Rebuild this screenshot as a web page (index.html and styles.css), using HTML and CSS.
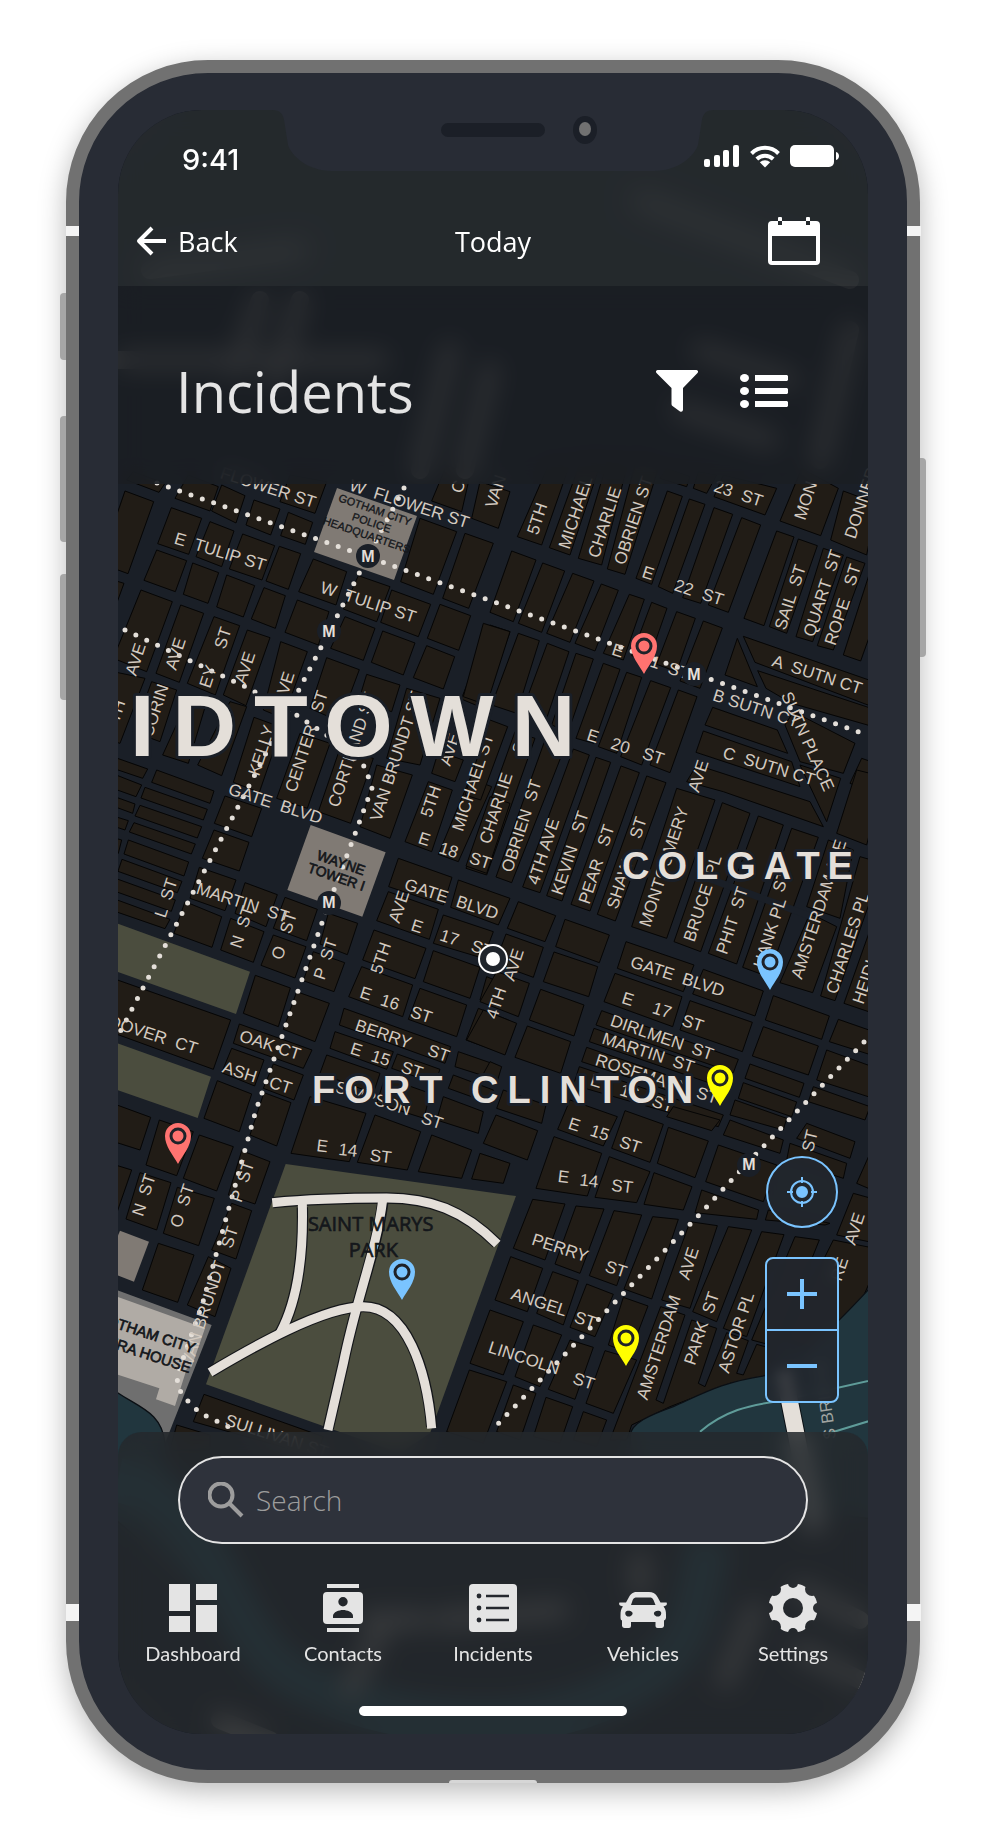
FILE: index.html
```html
<!DOCTYPE html>
<html lang="en">
<head>
<meta charset="utf-8">
<meta name="viewport" content="width=device-width, initial-scale=1">
<title>Incidents</title>
<link rel="stylesheet" href="styles.css">
</head>
<body>
<div class="phone">
  <span class="band band-tl"></span><span class="band band-tr"></span>
  <span class="band band-bl"></span><span class="band band-br"></span>
  <span class="key key-mute"></span><span class="key key-up"></span>
  <span class="key key-down"></span><span class="key key-power"></span>
  <span class="port"></span>

  <div class="screen">
    <svg class="map" viewBox="118 110 750 1624" preserveAspectRatio="xMidYMid slice" role="img" aria-label="Incident map">
      <defs>
        <g id="pin">
          <path d="M0 0C-5-9-13-18-13-28A13 13 0 0 1 13-28C13-18 5-9 0 0Z"/>
          <circle class="pin-ring" cy="-28" r="7"/>
        </g>
      </defs>

      <!-- blocks: north-west -->
      <g class="block" transform="translate(110 475) scale(.33333)">
        <path d="M45 48L131 80L54 296L-30 265ZM235 0L325 35L300 108L195 70ZM335 30L405 62L378 144L305 108ZM432 75L510 102L482 180L408 150ZM535 112L608 142L586 208L512 182ZM540 0L650 20L615 115L510 80ZM70 -10L165 25L147 52L50 15Z"/>
        <path d="M184 98L275 130L236 238L143 206ZM300 140L372 168L335 275L258 245ZM398 177L494 212L456 315L358 282ZM508 214L572 236L535 343L468 318ZM140 225L230 257L196 350L102 316ZM248 264L326 293L294 385L220 358ZM350 300L434 332L400 426L320 396ZM462 338L526 362L496 460L424 432Z"/>
        <path d="M93 345L187 380L110 590L10 550ZM212 390L281 415L208 622L138 595ZM312 425L389 452L316 660L232 625ZM412 465L480 488L408 692L340 660ZM512 500L592 530L520 730L460 705ZM-40 300L42 325L0 440L-40 420Z"/>
        <path d="M610 252L710 290L678 390L566 350ZM745 302L840 335L800 440L700 402ZM562 375L657 410L625 510L525 472ZM705 425L795 460L760 556L662 520ZM845 345L962 388L925 485L812 442ZM818 468L915 504L880 600L784 562ZM930 130L1040 170L970 358L872 320ZM1065 175L1150 205L1076 400L998 370ZM990 388L1082 422L1046 526L952 490ZM950 512L1034 545L1000 642L910 608ZM1010 -30L1080 0L1055 110L965 78ZM1110 20L1200 50L1165 160L1085 130ZM1140 450L1200 470L1120 700L1054 672Z"/>
        <path d="M650 548L748 584L690 740L600 700ZM770 598L870 630L845 710L745 680ZM125 620L200 645L150 800L70 770ZM10 590L105 610L30 805L-20 790ZM240 660L290 680L235 865L158 840ZM360 680L410 695L335 902L263 870ZM432 727L515 757L448 952L370 922ZM570 775L660 805L592 1000L500 970ZM690 820L790 850L722 1045L625 1010ZM800 870L907 900L840 1090L750 1055ZM985 830L1060 855L1035 920L965 895ZM890 640L990 670L930 870L830 850ZM955 920L1027 945L965 1130L885 1100ZM1080 910L1145 935L1045 1160L985 1138Z"/>
        <path d="M-20 835L113 882L98 910L-20 870ZM140 885L312 948L300 985L125 922ZM-20 885L95 930L78 965L-20 930Z"/>
      </g>
      <!-- blocks: north-east -->
      <g class="block" transform="translate(490 475) scale(.33333)">
        <path d="M180 -40L235 -20L155 210L82 185ZM275 -50L330 -30L240 240L178 218ZM355 -50L410 -20L335 270L265 250ZM440 -50L505 -20L405 298L352 282ZM532 48L577 64L485 328L438 310ZM598 72L645 88L548 355L505 335ZM672 98L728 118L632 385L578 368ZM755 128L812 150L715 412L655 390ZM530 -20L600 5L590 35L510 10ZM625 -10L680 0L650 55L610 40ZM700 0L860 40L825 120L672 65Z"/>
        <path d="M935 -20L1045 40L992 182L870 138ZM1060 48L1160 85L1130 240L1022 195ZM860 168L912 186L822 452L762 430ZM925 192L982 212L890 475L838 455ZM1000 220L1060 240L968 500L918 485ZM1070 246L1125 265L1030 525L982 512ZM1140 290L1200 310L1112 558L1060 540Z"/>
        <path d="M65 228L138 255L70 440L0 412ZM158 264L224 288L155 472L85 445ZM248 295L312 318L240 502L170 475ZM334 327L385 346L315 528L255 505ZM418 358L463 373L400 555L340 535ZM485 382L531 400L475 560L425 542ZM560 410L616 430L560 590L500 568ZM640 438L697 459L630 640L570 618Z"/>
        <path d="M-20 445L60 470L-10 690L-80 665ZM85 475L148 497L80 715L5 690ZM172 505L237 530L170 730L100 700ZM258 535L310 552L235 770L185 750ZM340 565L390 583L312 805L258 790ZM410 592L455 607L380 835L325 815ZM482 617L542 638L455 870L392 845ZM565 645L621 665L540 893L480 870Z"/>
        <path d="M0 735L53 755L-28 975L-75 960ZM75 770L135 790L-10 1200L-72 1180ZM165 795L225 815L65 1223L18 1206ZM250 822L298 840L150 1253L98 1236ZM318 847L362 862L216 1278L170 1262ZM393 873L448 893L300 1308L243 1288ZM470 903L528 923L376 1338L322 1318ZM560 940L675 975L530 1390L425 1355Z"/>
        <path d="M760 484L1180 630L1160 700L795 562ZM803 587L1180 712L1150 755L905 685L828 640ZM742 490L802 635L705 600ZM668 697L862 765L893 835L645 750ZM640 768L905 860L930 935L618 832ZM885 750L910 710L1095 805L1060 895L930 860ZM930 870L1052 910L1010 1040ZM1115 850L1200 880L1170 960L1080 925ZM620 870L960 980L1000 1055L700 950L590 920Z"/>
      </g>
      <!-- blocks: west -->
      <g class="block" transform="translate(110 790) scale(.33333)">
        <path d="M105 -8L292 58L280 90L93 24ZM90 46L275 110L262 144L75 78ZM72 98L256 162L244 192L58 126ZM55 150L236 216L222 258L42 192ZM36 208L216 274L202 308L24 244ZM16 265L196 330L184 364L4 300ZM0 322L180 388L165 416L-20 352ZM0 15L75 42L68 70L0 45ZM0 75L55 92L45 120L0 105ZM0 140L35 150L25 190L0 180Z"/>
        <path d="M345 18L455 55L425 140L313 100ZM312 120L417 157L388 243L277 205ZM268 232L378 270L345 362L240 325ZM405 278L502 314L468 410L375 370ZM225 335L335 380L306 472L192 430ZM525 322L622 358L590 452L490 415ZM362 385L462 425L430 517L332 480ZM490 435L588 470L555 564L453 526ZM655 370L743 400L712 494L630 462ZM610 485L704 518L672 605L580 572ZM436 556L541 594L505 710L400 670ZM560 605L658 640L615 755L520 718Z"/>
        <path d="M-20 555L362 690L310 838L-20 718ZM388 702L606 780L580 835L370 760ZM365 775L462 810L434 888L335 848ZM490 822L580 855L552 930L460 895ZM322 872L425 912L388 1025L282 985ZM462 908L543 938L500 1068L420 1035ZM-20 930L122 982L90 1080L-20 1045Z"/>
        <path d="M865 205L1026 262L1000 345L836 290ZM1045 270L1200 325L1165 405L1022 352ZM835 305L985 358L958 448L800 392ZM1000 375L1150 425L1120 505L970 460ZM792 420L948 475L915 566L758 510ZM970 482L1110 532L1080 625L940 575ZM755 530L908 585L878 680L716 620ZM930 595L1070 645L1040 740L895 688ZM702 655L1022 770L1005 820L688 705ZM675 725L850 785L830 838L660 775ZM862 792L990 838L975 880L845 835ZM650 795L810 850L790 910L630 850ZM825 862L960 910L942 985L800 940Z"/>
        <path d="M1045 785L1160 825L1145 865L1035 830ZM1030 855L1150 900L1140 940L1015 895ZM1000 920L1120 965L1105 1030L980 990ZM600 920L768 970L718 1115L543 1090ZM795 975L932 1025L892 1140L742 1117ZM965 1035L1085 1080L1055 1165L925 1145ZM1110 1090L1200 1120L1180 1180L1085 1167ZM1130 560L1200 590L1180 655L1110 630ZM1105 655L1195 690L1165 785L1068 750ZM1140 20L1200 40L1130 250L1068 228Z"/>
      </g>
      <!-- blocks: east -->
      <g class="block" transform="translate(490 790) scale(.33333)">
        <path d="M697 38L780 70L632 485L552 455ZM805 78L880 105L740 522L655 490ZM905 115L985 142L835 560L758 532ZM1100 -60L1180 -40L1130 165L1040 130ZM1015 150L1090 180L1050 385L950 350ZM960 370L1040 410L968 608L870 578ZM1110 200L1180 220L1035 632L992 618ZM1140 420L1200 440L1180 680L1062 640Z"/>
        <path d="M85 335L197 377L165 455L52 415ZM225 388L358 435L328 518L197 470ZM48 432L160 472L130 562L15 520ZM192 486L323 530L296 620L160 575ZM20 545L118 580L85 680L-30 635ZM152 598L282 645L252 738L118 690ZM-20 660L80 700L45 795L-70 750ZM112 708L242 755L212 850L75 802ZM0 815L35 830L20 880L-30 870ZM408 455L612 525L580 605L382 535ZM640 538L820 603L795 678L608 612ZM375 550L576 620L548 710L342 635ZM600 632L787 697L757 785L570 720Z"/>
        <path d="M335 662L745 808L730 848L318 705ZM312 715L725 858L705 895L298 755ZM290 772L560 865L545 905L275 815ZM268 830L700 975L685 1010L250 885ZM850 617L1018 678L995 748L826 690ZM820 710L985 768L955 855L787 798ZM780 822L942 880L928 922L765 865ZM760 878L920 936L905 980L745 925ZM735 930L890 985L880 1020L720 975ZM1045 688L1180 735L1160 800L1018 755ZM1010 780L1180 842L1150 925L980 870ZM970 890L1140 950L1125 990L955 935ZM40 900L168 945L155 1000L20 955ZM240 930L382 980L340 1068L203 1018ZM405 962L520 1003L480 1117L365 1075Z"/>
      </g>
      <!-- blocks: south-west -->
      <g class="block" transform="translate(110 1110) scale(.33333)">
        <path d="M148 30L250 65L200 197L108 165ZM268 75L370 110L320 243L220 205ZM0 160L65 180L20 310L-20 300ZM90 188L183 218L140 360L48 327ZM202 232L313 265L266 407L160 370ZM395 122L480 155L435 282L355 255ZM365 280L425 302L378 447L305 420ZM295 440L363 475L315 620L232 585ZM145 400L252 435L203 577L97 540ZM282 853L640 980L620 1040L250 935ZM200 945L300 975V1020H180ZM1078 780L1190 815L1120 1000L1010 965Z"/>
      </g>
      <!-- blocks: south-east -->
      <g class="block" transform="translate(490 1110) scale(.33333)">
        <path d="M18 15L143 62L112 150L-20 100ZM192 80L335 130L292 258L138 235ZM358 140L480 185L440 278L315 262ZM535 52L655 93L615 203L502 160ZM492 188L606 230L580 300L462 283ZM550 -10L690 30L665 62L530 20ZM720 30L880 90L870 130L700 75ZM685 105L860 165L820 275L647 215ZM635 240L806 300L800 328L615 308ZM950 40L1095 95L1080 145L920 85ZM900 100L1070 160L1060 205L890 150ZM835 300L1020 340L1005 345L826 330ZM1140 130L1200 140L1170 250L1100 220ZM1090 250L1180 275L1160 400L1040 375Z"/>
        <path d="M128 268L225 282L165 450L70 415ZM258 288L342 297L270 490L195 462ZM372 302L455 315L380 527L298 497ZM488 320L565 328L485 567L402 537ZM600 335L682 347L600 595L515 570ZM715 350L785 360L680 635L608 605ZM815 365L882 374L770 680L700 655ZM915 380L988 390L860 710L785 690ZM1030 390L1180 420L1120 560L960 720L880 690Z"/>
        <path d="M62 440L158 475L112 605L15 570ZM188 485L265 512L220 645L140 610ZM290 522L370 553L315 680L240 652ZM400 562L474 588L420 730L355 705ZM0 600L100 635L40 795L-60 760ZM130 645L215 675L150 830L75 800ZM240 690L310 712L255 868L175 838ZM345 722L440 750L370 910L288 880ZM70 825L138 850L90 990L20 965ZM168 862L248 890L210 1000L130 980ZM280 905L350 930L320 1010L250 990Z"/>
        <path d="M512 590L585 615L498 870L520 880L605 630L680 655L625 820L645 830L710 668L775 692L740 790L760 795L800 703L860 720L830 797L720 820L540 890L425 945L410 990H360Z"/>
      </g>

      <path class="lane" d="M702 876L810 916"/>

      <!-- parks, landmarks and water -->
      <g transform="translate(110 790) scale(.33333)">
        <path class="park" d="M-20 385L420 545L378 672L-20 530ZM-20 745L303 860L263 984L-20 885Z"/>
        <path class="landmark" d="M602 105L827 187L757 380L532 300Z"/>
      </g>
      <path class="landmark" d="M337 488L417 516L394 580L314 552Z"/>
      <g transform="translate(110 1110) scale(.33333)">
        <path class="park" d="M527 162L1218 258L960 970L870 1030L288 823Z"/>
        <g class="trail-edge"><path d="M488 278C620 265 720 264 830 264C960 264 1060 300 1160 400"/><path d="M577 292C580 400 570 560 510 670"/><path d="M302 786C430 710 640 590 760 590C890 590 950 780 965 950"/><path d="M818 280C800 420 740 560 700 760L655 955"/></g>
        <g class="trail"><path d="M487 278C620 265 720 264 830 264C960 264 1060 300 1162 402"/><path d="M577 280C580 400 570 560 510 670"/><path d="M300 787C430 710 640 590 760 590C890 590 950 780 965 955"/><path d="M818 270C800 420 740 560 700 760L654 960"/></g>
        <path class="landmark" d="M30 362L117 395L72 515L-20 480Z"/>
        <path class="plaza" d="M-20 525L305 645L165 1000L-20 900Z"/>
        <path class="opera" d="M-20 545L285 655L245 770L232 770L195 888L138 868L148 835L-20 780Z"/>
        <path class="water" d="M-20 815C60 890 155 890 165 1000C180 1180 330 1330 420 1500C340 1560 120 1300-20 1200Z"/>
      </g>
      <g transform="translate(490 1110) scale(.33333)">
        <path class="water" d="M1180 490C1000 690 900 770 825 797C700 815 640 850 550 890C480 915 420 940 420 980V1080L700 1180L1180 1230Z"/>
        <path class="ferry" d="M630 965C720 890 800 885 870 872L1180 803M1000 975L1180 920"/>
        <path class="bridge-edge" d="M880 780L918 970L975 1260"/>
        <path class="bridge" d="M880 780L918 970L975 1260"/>
      </g>

      <!-- outlying city beneath the bars -->
      <path class="canal" d="M118 1480C220 1500 220 1640 300 1680S500 1740 600 1700S690 1620 710 1540"/>
      <g class="outskirts"><path d="M100 360H380M450 350L420 470M490 370L465 470M260 300L235 370M300 300L275 380M700 350L790 380M680 410L770 440M850 330L820 460M640 200L850 280M150 270L300 250M640 1560V1590M370 1620H420M440 1620L560 1610M755 1610L725 1680M800 1590L860 1620M800 1650L860 1680M220 1720L270 1740M380 1630L350 1690"/></g>

      <g class="route">
        <path d="M157 483L368 557L867 735"/>
        <path d="M404 488L368 556L329 632L238 807L165 946L120 1032"/>
        <path d="M125 630L248 688L298 716L328 736L365 767L372 788L355 834L329 903L256 1110L203 1302L178 1373L177 1385L183 1396L200 1413L233 1429"/>
        <path d="M864 1042L757 1153L698 1216L494 1428"/>
      </g>

      <g class="street" transform="translate(110 475) scale(.33333)">
        <text transform="translate(328 8) rotate(18)">FLOWER ST</text>
        <text transform="translate(715 45) rotate(18)">W  FLOWER ST</text>
        <text transform="translate(190 205) rotate(17)">E  TULIP ST</text>
        <text transform="translate(628 352) rotate(18)">W  TULIP ST</text>
        <text transform="translate(78 605) rotate(-72)">AVE</text>
        <text transform="translate(198 588) rotate(-72)">AVE</text>
        <text transform="translate(300 642) rotate(-72)">EY</text>
        <text transform="translate(345 525) rotate(-72)">ST</text>
        <text transform="translate(406 630) rotate(-72)">AVE</text>
        <text transform="translate(524 690) rotate(-72)">AVE</text>
        <text transform="translate(8 800) rotate(-72)">10TH</text>
        <text transform="translate(126 790) rotate(-72)">CORIN</text>
        <text transform="translate(447 905) rotate(-72)">KELLY</text>
        <text transform="translate(557 955) rotate(-72)">CENTER   ST</text>
        <text transform="translate(686 1000) rotate(-72)">CORTLAND ST</text>
        <text transform="translate(812 1042) rotate(-72)">VAN BRUNDT ST</text>
        <text transform="translate(964 1030) rotate(-72)">5TH</text>
        <text transform="translate(1020 875) rotate(-72)">AVE</text>
        <text transform="translate(1058 1072) rotate(-72)">MICHAEL ST</text>
        <text transform="translate(1055 58) rotate(-72)">C</text>
        <text transform="translate(1158 102) rotate(-72)">VAN</text>
      </g>
      <g class="street" transform="translate(490 475) scale(.33333)">
        <text transform="translate(143 182) rotate(-72)">5TH</text>
        <text transform="translate(238 225) rotate(-72)">MICHAEL</text>
        <text transform="translate(326 252) rotate(-72)">CHARLIE</text>
        <text transform="translate(404 272) rotate(-72)">OBRIEN ST</text>
        <text transform="translate(453 305) rotate(18)">E</text>
        <text transform="translate(550 345) rotate(18)">22</text>
        <text transform="translate(632 372) rotate(18)">ST</text>
        <text transform="translate(668 48) rotate(18)">23</text>
        <text transform="translate(750 76) rotate(18)">ST</text>
        <text transform="translate(945 138) rotate(-72)">MON</text>
        <text transform="translate(1096 194) rotate(-72)">DONNER</text>
        <text transform="translate(886 468) rotate(-72)">SAIL  ST</text>
        <text transform="translate(972 488) rotate(-72)">QUART  ST</text>
        <text transform="translate(1036 514) rotate(-72)">ROPE   ST</text>
        <text transform="translate(362 538) rotate(18)">E</text>
        <text transform="translate(450 565) rotate(18)">21</text>
        <text transform="translate(530 594) rotate(18)">ST</text>
        <text transform="translate(843 572) rotate(18)">A  SUTN CT</text>
        <text transform="translate(665 675) rotate(18)">B SUTN CT</text>
        <text transform="translate(695 848) rotate(17)">C  SUTN CT</text>
        <text transform="translate(872 660) rotate(66)">SUTN PLACE</text>
        <text transform="translate(287 794) rotate(18)">E</text>
        <text transform="translate(359 820) rotate(18)">20</text>
        <text transform="translate(454 850) rotate(18)">ST</text>
        <text transform="translate(626 955) rotate(-72)">AVE</text>
        <text transform="translate(98 840) rotate(-72)">ST</text>
      </g>
      <g class="street" transform="translate(110 790) scale(.33333)">
        <text transform="translate(352 12) rotate(18)">GATE  BLVD</text>
        <text transform="translate(922 158) rotate(18)">E</text>
        <text transform="translate(984 188) rotate(18)">18</text>
        <text transform="translate(1075 218) rotate(18)">ST</text>
        <text transform="translate(880 298) rotate(18)">GATE  BLVD</text>
        <text transform="translate(868 402) rotate(-72)">AVE</text>
        <text transform="translate(814 555) rotate(-72)">5TH</text>
        <text transform="translate(900 420) rotate(18)">E</text>
        <text transform="translate(986 450) rotate(18)">17</text>
        <text transform="translate(1080 482) rotate(18)">ST</text>
        <text transform="translate(746 622) rotate(18)">E</text>
        <text transform="translate(808 644) rotate(18)">16</text>
        <text transform="translate(898 680) rotate(18)">ST</text>
        <text transform="translate(732 720) rotate(19)">BERRY    ST</text>
        <text transform="translate(718 790) rotate(18)">E</text>
        <text transform="translate(780 812) rotate(18)">15</text>
        <text transform="translate(870 846) rotate(18)">ST</text>
        <text transform="translate(672 905) rotate(18)">SIMPSON</text>
        <text transform="translate(930 998) rotate(18)">ST</text>
        <text transform="translate(256 310) rotate(18)">MARTIN  ST</text>
        <text transform="translate(166 386) rotate(-72)">L  ST</text>
        <text transform="translate(392 478) rotate(-72)">N  ST</text>
        <text transform="translate(516 512) rotate(-72)">O   ST</text>
        <text transform="translate(643 572) rotate(-72)">P  ST</text>
        <text transform="translate(-8 708) rotate(18)">DOVER  CT</text>
        <text transform="translate(385 752) rotate(18)">OAK CT</text>
        <text transform="translate(334 846) rotate(18)">ASH   CT</text>
      </g>
      <g class="street" transform="translate(490 790) scale(.33333)">
        <text transform="translate(0 165) rotate(-72)">CHARLIE</text>
        <text transform="translate(66 250) rotate(-72)">OBRIEN  ST</text>
        <text transform="translate(145 287) rotate(-72)">4TH AVE</text>
        <text transform="translate(216 318) rotate(-72)">KEVIN   ST</text>
        <text transform="translate(298 345) rotate(-72)">PEAR   ST</text>
        <text transform="translate(382 360) rotate(-72)">SHAW     ST</text>
        <text transform="translate(480 414) rotate(-72)">MONTGOMERY</text>
        <text transform="translate(613 458) rotate(-72)">BRUCE  PL</text>
        <text transform="translate(710 496) rotate(-72)">PHIT  ST</text>
        <text transform="translate(822 538) rotate(-72)">HANK PL</text>
        <text transform="translate(880 310) rotate(-72)">ST</text>
        <text transform="translate(935 570) rotate(-72)">AMSTERDAM AVE</text>
        <text transform="translate(1040 615) rotate(-72)">CHARLES PL</text>
        <text transform="translate(1120 645) rotate(-72)">HEIDI</text>
        <text transform="translate(418 530) rotate(18)">GATE  BLVD</text>
        <text transform="translate(392 638) rotate(18)">E</text>
        <text transform="translate(484 668) rotate(18)">17</text>
        <text transform="translate(572 706) rotate(18)">ST</text>
        <text transform="translate(358 706) rotate(19)">DIRLMEN  ST</text>
        <text transform="translate(333 760) rotate(18)">MARTIN  ST</text>
        <text transform="translate(313 824) rotate(18)">ROSEMARY  ST</text>
        <text transform="translate(298 884) rotate(18)">E</text>
        <text transform="translate(386 914) rotate(18)">16</text>
        <text transform="translate(482 948) rotate(18)">ST</text>
        <text transform="translate(72 576) rotate(-72)">AVE</text>
        <text transform="translate(20 690) rotate(-72)">4TH</text>
      </g>
      <g class="street" transform="translate(110 1110) scale(.33333)">
        <text transform="translate(618 123) rotate(7)">E</text>
        <text transform="translate(684 134) rotate(7)">14</text>
        <text transform="translate(778 152) rotate(7)">ST</text>
        <text transform="translate(98 322) rotate(-72)">N  ST</text>
        <text transform="translate(212 356) rotate(-72)">O  ST</text>
        <text transform="translate(394 280) rotate(-72)">P  ST</text>
        <text transform="translate(246 770) rotate(-72)">VAN BRUNDT</text>
        <text transform="translate(365 418) rotate(-72)">ST</text>
        <text transform="translate(342 945) rotate(18)">SULLIVAN ST</text>
      </g>
      <g class="street" transform="translate(490 1110) scale(.33333)">
        <text transform="translate(232 55) rotate(18)">E</text>
        <text transform="translate(297 76) rotate(18)">15</text>
        <text transform="translate(385 110) rotate(18)">ST</text>
        <text transform="translate(202 215) rotate(7)">E</text>
        <text transform="translate(267 226) rotate(7)">14</text>
        <text transform="translate(362 242) rotate(7)">ST</text>
        <text transform="translate(122 403) rotate(18)">PERRY</text>
        <text transform="translate(342 484) rotate(18)">ST</text>
        <text transform="translate(60 566) rotate(18)">ANGEL</text>
        <text transform="translate(250 636) rotate(18)">ST</text>
        <text transform="translate(-8 726) rotate(18)">LINCOLN</text>
        <text transform="translate(245 820) rotate(18)">ST</text>
        <text transform="translate(472 872) rotate(-72)">AMSTERDAM</text>
        <text transform="translate(597 512) rotate(-72)">AVE</text>
        <text transform="translate(614 768) rotate(-72)">PARK</text>
        <text transform="translate(668 614) rotate(-72)">ST</text>
        <text transform="translate(716 792) rotate(-72)">ASTOR PL</text>
        <text transform="translate(968 128) rotate(-76)">ST</text>
        <text transform="translate(1095 408) rotate(-72)">AVE</text>
        <text transform="translate(1054 516) rotate(-72)">RE</text>
        <text class="dim" transform="translate(1038 986) rotate(-98)">S BRIDGE</text>
      </g>

      <g class="place-name" transform="translate(110 475) scale(.33333)">
        <text class="place-small" transform="translate(683 78) rotate(19)">GOTHAM CITY</text>
        <text class="place-small" transform="translate(724 134) rotate(19)">POLICE</text>
        <text class="place-small" transform="translate(637 146) rotate(19)">HEADQUARTERS</text>
        <text transform="translate(618 1153) rotate(19)">WAYNE</text>
        <text transform="translate(590 1190) rotate(19)">TOWER I</text>
        <text class="place-large" transform="translate(-47 2539) rotate(18)">GOTHAM CITY</text>
        <text class="place-large" transform="translate(-74 2593) rotate(18)">OPERA HOUSE</text>
        <text class="park-name" x="782" y="2267">SAINT MARYS</text>
        <text class="park-name" x="790" y="2345">PARK</text>
      </g>

      <g class="metro">
        <circle cx="368" cy="556" r="12"/><text x="368" y="562">M</text>
        <circle cx="329" cy="631" r="12"/><text x="329" y="637">M</text>
        <circle cx="694" cy="674" r="12"/><text x="694" y="680">M</text>
        <circle cx="329" cy="903" r="12"/><text x="329" y="908">M</text>
        <circle cx="749" cy="1165" r="12"/><text x="749" y="1170">M</text>
      </g>

      <g class="district">
        <text class="district-big" x="130" y="756">IDTOWN</text>
        <text class="district-tight" x="622" y="879">COLGATE</text>
        <text x="312" y="1103">FORT CLINTON</text>
      </g>

      <g><circle class="me" cx="493" cy="959" r="14"/><circle class="me-dot" cx="493" cy="959" r="7"/></g>
      <use href="#pin" class="pin coral" x="644" y="674"/>
      <use href="#pin" class="pin coral" x="178" y="1164"/>
      <use href="#pin" class="pin blue" x="770" y="990"/>
      <use href="#pin" class="pin blue" x="402" y="1300"/>
      <use href="#pin" class="pin yellow" x="720" y="1106"/>
      <use href="#pin" class="pin yellow" x="626" y="1366"/>
    </svg>

    <header class="top">
      <div class="status">
        <span class="time">9:41</span>
        <span class="signals">
          <svg width="36" height="22" viewBox="0 0 36 22"><rect y="14" width="6" height="8" rx="2"/><rect x="10" y="10" width="6" height="12" rx="2"/><rect x="19" y="5" width="6" height="17" rx="2"/><rect x="29" width="6" height="22" rx="2"/></svg>
          <svg width="32" height="23" viewBox="0 0 32 23"><path class="arc" d="M2.500 8.500A19 19 0 0 1 29.500 8.500M7.800 14A12 12 0 0 1 24.200 14"/><path d="M16 22.500L10.800 17.300A7.400 7.400 0 0 1 21.200 17.300Z"/></svg>
          <svg width="49" height="22" viewBox="0 0 49 22"><rect width="44" height="22" rx="5"/><path d="M46 7C50 8 50 14 46 15Z"/></svg>
        </span>
      </div>
      <nav class="bar">
        <a class="back" href="#back"><svg width="31" height="30" viewBox="0 0 31 30"><path d="M30 15H3M16 2L3 15L16 28"/></svg>Back</a>
        <span class="day">Today</span>
        <button class="icon-btn calendar" aria-label="Choose date"><svg width="52" height="48" viewBox="0 0 52 48"><path fill-rule="evenodd" d="M4 4H10V8H14V4H38V8H42V4H48A4 4 0 0 1 52 8V44A4 4 0 0 1 48 48H4A4 4 0 0 1 0 44V8A4 4 0 0 1 4 4ZM4 19V44H48V19Z"/><path d="M10 4V1Q10 0 11 0H13Q14 0 14 1V4ZM38 4V1Q38 0 39 0H41Q42 0 42 1V4Z"/></svg></button>
      </nav>
    </header>

    <section class="title">
      <h1>Incidents</h1>
      <button class="icon-btn" aria-label="Filter"><svg width="42" height="42" viewBox="0 0 42 42"><path d="M1.500 0H40.500Q43 1 41.500 3L27 18V40Q26.500 42.500 24 41.500L16.500 36Q15.500 35.500 15.500 34V18L.5 3Q-1 1 1.500 0Z"/></svg></button>
      <button class="icon-btn" aria-label="List view"><svg width="48" height="34" viewBox="0 0 48 34"><ellipse cx="4.500" cy="4" rx="4.500" ry="4"/><ellipse cx="4.500" cy="17" rx="4.500" ry="4"/><ellipse cx="4.500" cy="30" rx="4.500" ry="4"/><path d="M15 1H47L48 2V6L47 7H15ZM15 14H47L48 15V19L47 20H15ZM15 27H47L48 28V32L47 33H15Z"/></svg></button>
    </section>

    <div class="controls">
      <button class="locate" aria-label="My location"><svg width="30" height="30" viewBox="0 0 30 30"><circle class="fill" cx="15" cy="15" r="5"/><path d="M15 0V6M15 24V30M0 15H6M24 15H30"/><circle cx="15" cy="15" r="11"/></svg></button>
      <div class="zoom">
        <button aria-label="Zoom in"><svg width="30" height="30" viewBox="0 0 30 30"><path class="thick" d="M15 0V30M0 15H30"/></svg></button>
        <button aria-label="Zoom out"><svg width="30" height="30" viewBox="0 0 30 30"><path class="thick" d="M0 15H30"/></svg></button>
      </div>
    </div>

    <footer class="bottom">
      <label class="search">
        <svg width="36" height="36" viewBox="0 0 36 36"><circle cx="13" cy="13" r="11.500"/><path d="M21 21L34 34"/></svg>
        <input type="search" placeholder="Search" aria-label="Search">
      </label>
      <nav class="tabs">
        <a href="#dashboard"><svg width="48" height="48" viewBox="0 0 48 48"><path d="M0 0H21V27H0ZM0 32H21V48H0ZM27 0H48V16H27ZM27 21H48V48H27Z"/></svg>Dashboard</a>
        <a href="#contacts"><svg width="48" height="48" viewBox="0 0 48 48"><path fill-rule="evenodd" d="M8 0H40V4H8ZM8 44H40V48H8ZM8 8H40A4 4 0 0 1 44 12V36A4 4 0 0 1 40 40H8A4 4 0 0 1 4 36V12A4 4 0 0 1 8 8ZM24 13A4.700 4.700 0 0 0 24 22.400A4.700 4.700 0 0 0 24 13ZM14 34H34V32C34 28 28 26 24 26S14 28 14 32Z"/></svg>Contacts</a>
        <a href="#incidents"><svg width="48" height="48" viewBox="0 0 48 48"><rect width="48" height="48" rx="4"/><g class="cut"><circle cx="10" cy="12" r="2.400"/><circle cx="10" cy="24" r="2.400"/><circle cx="10" cy="36" r="2.400"/><path d="M17 10.800H40V13.200H17ZM17 22.800H40V25.200H17ZM17 34.800H40V37.200H17Z"/></g></svg>Incidents</a>
        <a href="#vehicles"><svg width="48" height="48" viewBox="0 0 48 48"><path fill-rule="evenodd" d="M18 8H30C34 8 36.500 9.500 38.500 13L41.500 18.500H47.500Q48.500 20 47 21.500L44.500 22.500C46.500 25 47 27 47 31V34Q46.500 36 45 36.500V42Q44.500 44 42.500 44H38.500Q36.500 44 36.500 42V38H12V42Q12 44 10 44H5.500Q3.500 44 3 42V36.500Q1.500 36 1.500 34V31C1.500 27 2 25 4 22.500L1 21.500Q-.5 20 .5 18.500H7L10 13C12 9.500 14 8 18 8ZM12 21H36.500L34.500 16C33.500 14 32.500 13.500 30.500 13.500H18C16 13.500 14.500 14 13.700 16ZM6.500 28C7.500 26.500 11 26 13 28C14.500 30 13 31.500 11 32.500C8 33 5.500 31.500 6.500 28ZM42 28C41 26.500 37.500 26 35.500 28C34 30 35.500 31.500 37.500 32.500C40.500 33 43 31.500 42 28Z"/></svg>Vehicles</a>
        <a href="#settings"><svg width="48" height="48" viewBox="0 0 48 48"><mask id="cog"><rect width="48" height="48" fill="#fff"/><g fill="#000"><circle cx="24" cy="24" r="10"/><circle cx="24" cy="-1" r="5"/><circle cx="24" cy="49" r="5"/><circle cx="-1" cy="24" r="5"/><circle cx="49" cy="24" r="5"/><circle cx="5" cy="5" r="7"/><circle cx="43" cy="5" r="7"/><circle cx="5" cy="43" r="7"/><circle cx="43" cy="43" r="7"/></g></mask><circle cx="24" cy="24" r="24.500" mask="url(#cog)"/></svg>Settings</a>
      </nav>
      <span class="home"></span>
    </footer>

    <svg class="notch" width="442" height="62" viewBox="0 0 442 62"><path class="notch-body" d="M0 0C8 0 11 4 12 10L16 35C19 45 35 61 60 61H382C407 61 423 45 426 35L430 10C431 4 434 0 442 0Z"/><rect class="lens" x="169" y="13" width="104" height="14" rx="7"/><ellipse class="lens" cx="313" cy="20" rx="12" ry="14"/><ellipse class="glint" cx="313" cy="19" rx="6" ry="7"/></svg>
  </div>
</div>
</body>
</html>
```

FILE: styles.css
```css
* { box-sizing: border-box; }

body {
  margin: 0;
  min-height: 100vh;
  padding: 60px 66px 61px;
  display: flex;
  background: #fff;
  font-family: Lato, "Open Sans", sans-serif;
  color: #fff;
}

button { font: inherit; color: inherit; padding: 0; cursor: pointer; }
a { color: inherit; text-decoration: none; }
svg { display: block; }

/* device */
.phone {
  position: relative;
  flex: 1;
  display: flex;
  padding: 37px 39px 36px;
  border: 13px solid #717171;
  border-radius: 142px;
  background: #282c35;
  box-shadow: 0 8px 28px rgba(0, 0, 0, .28);
}
.band { position: absolute; width: 13px; background: #f4f4f4; }
.band-tl, .band-tr { top: 153px; height: 10px; }
.band-bl, .band-br { bottom: 149px; height: 17px; }
.band-tl, .band-bl { left: -13px; }
.band-tr, .band-br { right: -14px; width: 14px; }
.key { position: absolute; width: 6px; background: #a6a6a6; }
.key-mute, .key-up, .key-down { left: -19px; border-radius: 4px 0 0 4px; }
.key-mute { top: 220px; height: 67px; }
.key-up { top: 343px; height: 126px; }
.key-down { top: 501px; height: 126px; }
.key-power { right: -19px; top: 385px; height: 199px; border-radius: 0 4px 4px 0; }
.port {
  position: absolute;
  left: 50%;
  bottom: -13px;
  width: 88px;
  height: 3px;
  margin-left: -44px;
  border-radius: 4px 4px 0 0;
  background: #d6d6d6;
}

.screen {
  position: relative;
  flex: 1;
  min-width: 0;
  display: flex;
  flex-direction: column;
  overflow: hidden;
  border-radius: 84px;
  background: #1a1f27;
}
.notch { position: absolute; top: 0; left: 50%; margin-left: -221px; }
.notch-body { fill: #282c35; }
.lens { fill: #1b1f27; }
.glint { fill: #717171; }

/* map */
.map { position: absolute; inset: 0; width: 100%; height: 100%; }
.block { fill: #211c16; stroke: #050505; stroke-width: 3px; stroke-linejoin: round; }
.lane { fill: none; stroke: #1a1f27; stroke-width: 7px; }
.park { fill: #4b4d3e; }
.landmark { fill: #807a74; }
.plaza { fill: #6f6f6f; }
.opera { fill: #b0aba5; }
.water { fill: #21363e; stroke: #0b0f14; stroke-width: 4px; }
.canal { fill: none; stroke: #24505c; stroke-width: 44px; }
.outskirts { fill: none; stroke: #8f8b86; stroke-width: 18px; stroke-linecap: round; }
.ferry { fill: none; stroke: #5f9c99; stroke-width: 6px; }
.bridge { stroke: #e4dfd9; stroke-width: 50px; fill: none; }
.bridge-edge { stroke: #0b0f14; stroke-width: 56px; fill: none; }
.trail { fill: none; stroke: #e4dfd9; stroke-width: 27px; }
.trail-edge { fill: none; stroke: #14161a; stroke-width: 34px; }
.route path {
  fill: none;
  stroke: #e4dfd9;
  stroke-width: 5px;
  stroke-linecap: round;
  stroke-dasharray: 0 12;
}
.street, .place-name { font: 51px "Liberation Sans", Arial, sans-serif; fill: #d3cac0; }
.street text, .place-name text { white-space: pre; }
.street .dim { fill: #9fa3a0; }
.place-name { font-size: 42px; fill: #14171b; }
.place-name text { stroke: #14171b; stroke-width: 2px; }
.place-name .place-small { font-size: 33px; stroke-width: 1px; }
.place-name .place-large { font-size: 45px; }
.place-name .park-name { font: 60px "Open Sans", sans-serif; text-anchor: middle; stroke-width: 2px; }
.metro circle { fill: #1a1f27; }
.metro text { font: bold 16px "Liberation Sans", Arial, sans-serif; fill: #e4dfd9; text-anchor: middle; }
.district text {
  font: bold 38px "Liberation Sans", Arial, sans-serif;
  letter-spacing: 9px;
  fill: #e4dfd9;
  stroke: #1a1f27;
  stroke-width: 6px;
  stroke-linejoin: round;
  paint-order: stroke;
}
.district .district-tight { letter-spacing: 8px; }
.district .district-big { font-size: 88px; letter-spacing: 18px; }
.me { fill: #1f242b; stroke: #fff; stroke-width: 2px; }
.me-dot { fill: #fff; }
.pin-ring { fill: none; stroke: #1f2229; stroke-width: 3px; }
.coral { fill: #ff7370; }
.blue { fill: #7ac4ff; }
.yellow { fill: #ff0; }

/* top bars */
.top {
  position: relative;
  background: rgba(38, 42, 46, .9);
  backdrop-filter: blur(14px);
}
.status {
  height: 90px;
  padding: 2px 29px 0 64px;
  display: flex;
  align-items: center;
  justify-content: space-between;
}
.time { font: 500 29px Inter, sans-serif; padding-top: 6px; }
.signals { display: flex; align-items: center; gap: 9px; fill: #fff; }
.arc { fill: none; stroke: #fff; stroke-width: 4px; }
.bar {
  height: 86px;
  padding: 0 48px 4px 18px;
  display: grid;
  grid-template-columns: 1fr auto 1fr;
  align-items: center;
  font-family: "Open Sans", sans-serif;
  font-size: 27px;
  font-weight: 500;
}
.back { display: flex; align-items: center; gap: 11px; }
.back svg { fill: none; stroke: #fff; stroke-width: 4px; stroke-linejoin: round; }
.day { padding-left: 30px; }
.icon-btn { border: 0; background: none; fill: #fff; }
.calendar { justify-self: end; }

.title {
  position: relative;
  height: 198px;
  padding: 12px 80px 0 58px;
  display: flex;
  align-items: center;
  gap: 42px;
  background: rgba(26, 30, 34, .84);
  backdrop-filter: blur(12px);
}
h1 { margin: 0 auto 0 0; font: 400 56px/64px "Open Sans", sans-serif; color: #e4e4e4; }

/* map controls */
.controls {
  position: relative;
  flex: 1;
  padding: 0 29px 29px;
  display: flex;
  flex-direction: column;
  justify-content: flex-end;
  align-items: flex-end;
  gap: 29px;
}
.locate, .zoom {
  border: 2px solid #7ac4ff;
  background: rgba(34, 39, 46, .9);
  backdrop-filter: blur(6px);
  stroke: #7ac4ff;
  fill: none;
}
.locate { width: 72px; height: 72px; margin-right: 1px; border-radius: 50%; display: grid; place-items: center; stroke-width: 2px; }
.locate .fill { fill: #7ac4ff; }
.zoom { width: 74px; border-radius: 8px; display: flex; flex-direction: column; }
.zoom button { height: 70px; border: 0; background: none; display: grid; place-items: center; }
.zoom button + button { height: 72px; border-top: 2px solid #7ac4ff; }
.thick { stroke-width: 4px; }

/* bottom panel */
.bottom {
  position: relative;
  height: 302px;
  padding: 24px 0 18px;
  display: flex;
  flex-direction: column;
  align-items: center;
  border-radius: 24px 24px 0 0;
  background: rgba(36, 40, 44, .82);
  backdrop-filter: blur(12px);
}
.search {
  align-self: stretch;
  height: 88px;
  margin: 0 60px;
  padding: 0 28px;
  display: flex;
  align-items: center;
  gap: 12px;
  border: 2px solid #e4e4e4;
  border-radius: 44px;
  background: #2e323b;
}
.search svg { flex: none; fill: none; stroke: #9d9d9d; stroke-width: 4px; }
.search input {
  flex: 1;
  min-width: 0;
  padding: 0;
  border: 0;
  outline: 0;
  background: none;
  font: 300 28px "Open Sans", sans-serif;
  color: #e4e4e4;
}
.search input::placeholder { color: #9d9d9d; opacity: 1; }
.tabs {
  align-self: stretch;
  display: grid;
  grid-template-columns: repeat(5, 1fr);
  padding-top: 40px;
  font-size: 20px;
  line-height: 24px;
  color: #e4e4e4;
}
.tabs a { display: flex; flex-direction: column; align-items: center; gap: 9px; }
.tabs svg { fill: #e4e4e4; }
.tabs .cut { fill: #25282e; }
.home { width: 268px; height: 10px; margin-top: auto; border-radius: 5px; background: #fff; }
```
